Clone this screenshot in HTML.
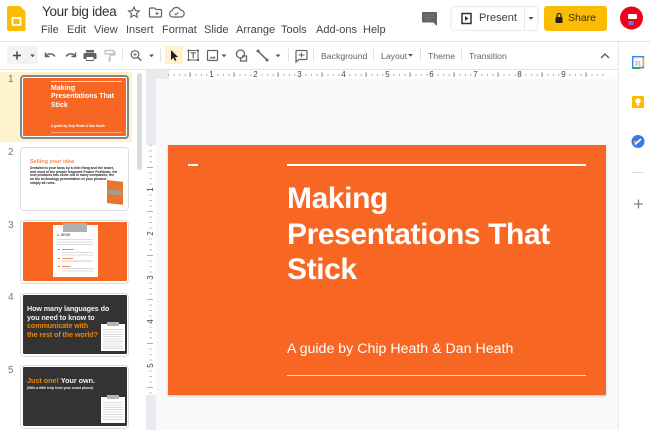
<!DOCTYPE html>
<html><head><meta charset="utf-8"><style>
html,body{margin:0;padding:0;width:650px;height:430px;overflow:hidden;background:#fff;font-family:"Liberation Sans",sans-serif}
#root{position:relative;width:650px;height:430px;overflow:hidden}
.a{position:absolute}
.t{position:absolute;white-space:nowrap}
svg{position:absolute;left:0;top:0}
.menu{font-size:11px;color:#444;top:24px;line-height:13px}
.tb{font-size:8.700px;color:#5f6368;top:50px;line-height:12px}
.thumb{position:absolute;left:20px;width:107px;height:62px;border:1px solid #dadce0;border-radius:4px;background:#fff}
.in{position:absolute;left:2px;top:1px;width:104px;height:59px;overflow:hidden;border-radius:1px}
.num{position:absolute;font-size:10px;line-height:11px;color:#777;left:8px}
.rn{position:absolute;width:7px;height:9px;line-height:9px;font-size:8px;text-align:center;background:#fff;color:#444}
.ln{background:repeating-linear-gradient(#ddd 0,#ddd 1px,#fff 1px,#fff 2.400px)}
</style></head><body><div id="root">

<!-- backgrounds -->
<div class="a" style="left:0;top:41px;width:650px;height:1px;background:#e3e4e6"></div>
<div class="a" style="left:0;top:69px;width:618px;height:1px;background:#e3e4e6"></div>
<div class="a" style="left:146px;top:70px;width:472px;height:360px;background:#f8f9fa"></div>
<div class="a" style="left:618px;top:42px;width:1px;height:388px;background:#e8eaed"></div>
<div class="a" style="left:146px;top:70px;width:472px;height:9px;background:#e8eaed"></div>
<div class="a" style="left:169px;top:70px;width:449px;height:9px;background:#fff"></div>
<div class="a" style="left:146px;top:70px;width:10px;height:360px;background:#e8eaed"></div>
<div class="a" style="left:146px;top:145px;width:10px;height:250px;background:#fff"></div>
<div class="a" style="left:0;top:72px;width:132px;height:70px;background:#fef2cf"></div>
<div class="a" style="left:137px;top:73px;width:5px;height:97px;background:#dadce0;border-radius:3px"></div>

<!-- ruler ticks -->
<div class="a" style="left:168px;top:74px;width:438px;height:2px;background:repeating-linear-gradient(90deg,#b0b3b6 0,#b0b3b6 1px,transparent 1px,transparent 5.500px)"></div>
<div class="a" style="left:149px;top:145px;width:3px;height:250px;background:repeating-linear-gradient(#c4c6c9 0,#c4c6c9 1px,transparent 1px,transparent 5.500px)"></div>

<!-- header icons/text -->
<svg width="650" height="430" viewBox="0 0 650 430">
  <path d="M9 6h11l5.500 5.500V29a2 2 0 0 1-2 2H9a2 2 0 0 1-2-2V8a2 2 0 0 1 2-2z" fill="#fbbc04"/>
  <rect x="12.500" y="18" width="8" height="7" rx="1" fill="none" stroke="#fff" stroke-width="1.800"/>
  <!-- star -->
  <path d="M134 7l1.500 3.600 3.900.3-3 2.500.9 3.800-3.300-2-3.300 2 .9-3.800-3-2.500 3.900-.3z" fill="none" stroke="#5f6368" stroke-width="1.100"/>
  <!-- folder -->
  <path d="M150.500 8h4l1.500 1.500h4.500a1 1 0 0 1 1 1v5.500a1 1 0 0 1-1 1h-10a1 1 0 0 1-1-1v-7a1 1 0 0 1 1-1z" fill="none" stroke="#5f6368" stroke-width="1.200"/>
  <path d="M155.500 13.500h3M157 12v3" stroke="#5f6368" stroke-width="1"/>
  <!-- cloud -->
  <path d="M174 17h-1.500a3.200 3.200 0 0 1-.4-6.300 4.500 4.500 0 0 1 8.400-.6 3.400 3.400 0 0 1 .5 6.900z" fill="none" stroke="#5f6368" stroke-width="1.200"/>
  <path d="M174.500 13.500l1.500 1.300 2.500-2.600" fill="none" stroke="#5f6368" stroke-width="1"/>
  <!-- comment -->
  <path d="M423 12h13a1 1 0 0 1 1 1v11l0 2-3.500-3.500H423a1 1 0 0 1-1-1V13a1 1 0 0 1 1-1z" fill="#5f6368"/>
  <path d="M425 15h9M425 17.500h9M425 20h6" stroke="#777" stroke-width="1"/>
  <!-- present -->
  <rect x="451" y="6.500" width="87" height="24" rx="3" fill="#fff" stroke="#e8eaed"/>
  <path d="M524.500 7v23" stroke="#e8eaed"/>
  <rect x="462" y="13.500" width="9" height="10" fill="none" stroke="#333" stroke-width="1.500"/>
  <path d="M465 16v5l3.500-2.500z" fill="#333"/>
  <path d="M528.500 17h5l-2.500 2.800z" fill="#444"/>
  <!-- share -->
  <rect x="544" y="6" width="63" height="25" rx="3" fill="#fbbc04"/>
  <rect x="555.500" y="17" width="7" height="6" rx="1" fill="#222"/>
  <path d="M557 17v-1.500a2 2 0 0 1 4 0V17" fill="none" stroke="#222" stroke-width="1.200"/>
  <!-- avatar -->
  <circle cx="631.500" cy="18" r="11.500" fill="#f0001a"/>
  <rect x="628" y="14" width="9" height="5" rx="1" fill="#fff"/>
  <rect x="628.500" y="21" width="5" height="4" fill="#5b7fd6"/>

  <!-- toolbar -->
  <rect x="7" y="46" width="31" height="18" rx="2" fill="#f1f3f4"/>
  <path d="M13 55.500h8M17 51.500v8" stroke="#444" stroke-width="1.500"/>
  <path d="M30 54.500h5l-2.500 2.800z" fill="#555"/>
  <!-- undo/redo -->
  <path d="M45.500 52.500v4h4M46 56c2-2.800 6.500-3 9 .5" fill="none" stroke="#5f6368" stroke-width="1.500"/>
  <path d="M75.500 52.500v4h-4M75 56c-2-2.800-6.500-3-9 .5" fill="none" stroke="#5f6368" stroke-width="1.500"/>
  <!-- print -->
  <path d="M85 53h10a1.500 1.500 0 0 1 1.500 1.500V59h-2.500v2h-8v-2h-2.500v-4.500A1.500 1.500 0 0 1 85 53z" fill="#5f6368"/>
  <rect x="86" y="50" width="8" height="2.500" fill="#5f6368"/>
  <rect x="86.500" y="57" width="7" height="3" fill="#fff"/>
  <!-- paint -->
  <path d="M105 50.500h8.500v3.500H105zM113.500 52h1.500v3h-5v2" fill="none" stroke="#bdc1c6" stroke-width="1.200"/>
  <rect x="108.700" y="57" width="2" height="4.500" fill="#bdc1c6"/>
  <path d="M122.500 48v14" stroke="#e3e4e6"/>
  <!-- zoom -->
  <circle cx="135" cy="54.500" r="3.800" fill="none" stroke="#5f6368" stroke-width="1.200"/>
  <path d="M138 57.500l3.300 3.300" stroke="#5f6368" stroke-width="1.400"/>
  <path d="M133.200 54.500h3.600M135 52.700v3.600" stroke="#5f6368" stroke-width=".8"/>
  <path d="M149 54.500h5l-2.500 2.800z" fill="#555"/>
  <path d="M160.500 48v14" stroke="#e3e4e6"/>
  <!-- select -->
  <rect x="165" y="46" width="18" height="18" rx="1" fill="#fef2cf"/>
  <path d="M171 50v10l2.400-2.300 1.500 3.300 1.500-.7-1.500-3.200h3.200z" fill="#222"/>
  <!-- text box -->
  <rect x="188.500" y="50.500" width="9.500" height="9.500" fill="none" stroke="#5f6368" stroke-width="1"/>
  <path d="M190.500 52.800h5.500M193.200 52.800v5.500" stroke="#5f6368" stroke-width="1.200"/>
  <rect x="187.500" y="49.500" width="2" height="2" fill="#5f6368"/><rect x="197" y="49.500" width="2" height="2" fill="#5f6368"/><rect x="187.500" y="59" width="2" height="2" fill="#5f6368"/><rect x="197" y="59" width="2" height="2" fill="#5f6368"/>
  <!-- image -->
  <rect x="207.500" y="50.500" width="10" height="10" rx="1" fill="none" stroke="#5f6368" stroke-width="1.200"/>
  <path d="M209.500 58.500l2-2 1.500 1.200 1.500-1.700 1 2.500z" fill="#5f6368"/>
  <path d="M221.500 54.500h5l-2.500 2.800z" fill="#555"/>
  <!-- shape -->
  <circle cx="240.500" cy="54" r="4" fill="none" stroke="#5f6368" stroke-width="1.300"/>
  <path d="M242 56h4.500v5h-6v-2.500" fill="none" stroke="#5f6368" stroke-width="1.300"/>
  <!-- line -->
  <path d="M258 51l9 9" stroke="#5f6368" stroke-width="1.500"/>
  <circle cx="258" cy="51" r="1.500" fill="#5f6368"/><circle cx="267" cy="60" r="1.500" fill="#5f6368"/>
  <path d="M275.500 54.500h5l-2.500 2.800z" fill="#555"/>
  <path d="M288.500 48v14" stroke="#e3e4e6"/>
  <!-- comment add -->
  <path d="M297 50.500h9a1 1 0 0 1 1 1v7a1 1 0 0 1-1 1h-7l-3 2.500v-10.500a1 1 0 0 1 1-1z" fill="none" stroke="#5f6368" stroke-width="1.200"/>
  <path d="M298.500 55h6M301.500 52.500v5" stroke="#5f6368" stroke-width="1.100"/>
  <path d="M313.500 48v14" stroke="#e3e4e6"/>
  <path d="M373.500 48v14M420.500 48v14M461.500 48v14" stroke="#e3e4e6"/>
  <path d="M408 54h5l-2.500 2.800z" fill="#555"/>
  <path d="M601 58l4-4 4 4" fill="none" stroke="#5f6368" stroke-width="1.500"/>

  <!-- side panel -->
  <rect x="632.700" y="56.700" width="10.600" height="11" fill="#fff" stroke="#4285f4" stroke-width="1.500"/>
  <path d="M632 68h8" stroke="#34a853" stroke-width="2"/><path d="M643.500 58v8" stroke="#fbbc04" stroke-width="1.600"/>
  <text x="638" y="65.500" font-size="6" text-anchor="middle" fill="#4285f4" font-family="Liberation Sans">31</text>
  <rect x="632" y="96" width="12" height="12" rx="1" fill="#fbbc04"/>
  <circle cx="638" cy="101" r="2.700" fill="#fff"/><rect x="636.700" y="103.800" width="2.600" height="1.600" fill="#fff"/>
  <circle cx="638" cy="141.500" r="6.500" fill="#3b78e7"/>
  <path d="M635 144.500l6-5.500" stroke="#fff" stroke-width="1.800"/><circle cx="635" cy="142" r="1.200" fill="#fbbc04"/>
  <path d="M632 172.500h12" stroke="#dadce0"/>
  <path d="M634 204h9M638.500 199.500v9" stroke="#80868b" stroke-width="1.300"/>

  <!-- ruler half-inch ticks -->
  <path stroke="#999" stroke-width="1" d="M190 72v5M234 72v5M278 72v5M322 72v5M366 72v5M410 72v5M454 72v5M498 72v5M542 72v5M586 72v5"/>
  <path stroke="#aaa" stroke-width="1" d="M147 167.500h6M147 211.500h6M147 255.500h6M147 299.500h6M147 343.500h6M147 387.500h6"/>
</svg>

<div class="t" style="left:42px;top:3px;font-size:13.500px;line-height:18px;color:#333;letter-spacing:-.3px">Your big idea</div>
<div class="t menu" style="left:41px">File</div>
<div class="t menu" style="left:67px">Edit</div>
<div class="t menu" style="left:94px">View</div>
<div class="t menu" style="left:126px">Insert</div>
<div class="t menu" style="left:162px">Format</div>
<div class="t menu" style="left:204px">Slide</div>
<div class="t menu" style="left:236px">Arrange</div>
<div class="t menu" style="left:281px">Tools</div>
<div class="t menu" style="left:316px">Add-ons</div>
<div class="t menu" style="left:363px">Help</div>
<div class="t" style="left:479px;top:11px;font-size:11px;line-height:14px;color:#3c4043">Present</div>
<div class="t" style="left:568px;top:11px;font-size:10.500px;line-height:14px;color:#3c3005">Share</div>
<div class="t tb" style="left:321px">Background</div>
<div class="t tb" style="left:381px">Layout</div>
<div class="t tb" style="left:428px">Theme</div>
<div class="t tb" style="left:469px">Transition</div>

<!-- ruler numbers -->
<span class="rn" style="left:208px;top:70px">1</span>
<span class="rn" style="left:252px;top:70px">2</span>
<span class="rn" style="left:296px;top:70px">3</span>
<span class="rn" style="left:340px;top:70px">4</span>
<span class="rn" style="left:384px;top:70px">5</span>
<span class="rn" style="left:428px;top:70px">6</span>
<span class="rn" style="left:472px;top:70px">7</span>
<span class="rn" style="left:516px;top:70px">8</span>
<span class="rn" style="left:560px;top:70px">9</span>
<span class="rn" style="left:147px;top:185px;transform:rotate(-90deg)">1</span>
<span class="rn" style="left:147px;top:229px;transform:rotate(-90deg)">2</span>
<span class="rn" style="left:147px;top:273px;transform:rotate(-90deg)">3</span>
<span class="rn" style="left:147px;top:317px;transform:rotate(-90deg)">4</span>
<span class="rn" style="left:147px;top:361px;transform:rotate(-90deg)">5</span>

<!-- main slide -->
<div class="a" style="left:168px;top:145px;width:438px;height:250px;background:#f76623;box-shadow:0 1px 2px rgba(0,0,0,.22)">
  <div class="a" style="left:20px;top:19px;width:10px;height:2px;background:#fff"></div>
  <div class="a" style="left:119px;top:19px;width:299px;height:2px;background:#fff"></div>
  <div class="t" style="left:119px;top:36px;font-size:30px;line-height:35.500px;font-weight:bold;color:#fff;letter-spacing:-.4px">Making<br>Presentations That<br>Stick</div>
  <div class="t" style="left:119px;top:195px;font-size:14.200px;line-height:19px;color:#fff">A guide by Chip Heath &amp; Dan Heath</div>
  <div class="a" style="left:119px;top:230px;width:299px;height:1px;background:#ffd9c4"></div>
</div>

<!-- thumbs -->
<div class="num" style="top:74px">1</div>
<div class="thumb" style="top:75px;height:60px;border:2px solid #80868b;width:105px"><div class="in" style="left:1px;top:1px;width:103px;height:58px;background:#f76623">
  <div class="a" style="left:28px;top:3px;width:71px;height:1px;background:#ffd9c4"></div>
  <div class="t" style="left:28px;top:7px;font-size:7px;line-height:8.300px;font-weight:bold;color:#fff">Making<br>Presentations That<br>Stick</div>
  <div class="t" style="left:28px;top:46px;font-size:3.200px;line-height:5px;font-weight:bold;color:#fff">A guide by Chip Heath &amp; Dan Heath</div>
  <div class="a" style="left:28px;top:54px;width:71px;height:1px;background:#ffa679"></div>
</div></div>

<div class="num" style="top:147px">2</div>
<div class="thumb" style="top:147px"><div class="in" style="background:#fff">
  <div class="t" style="left:7px;top:10px;font-size:5.500px;line-height:7px;font-weight:bold;color:#f98a50">Selling your idea</div>
  <div class="t" style="left:7px;top:18px;font-size:3.400px;line-height:3.700px;color:#222;font-weight:bold">Dreaded to your boss by a chin thing and the smart,<br>and most of the people fragment Fowler Politician, the<br>new products has come out in many companies, the<br>on the technology presentation of your product<br>simply all rules.</div>
  <div class="a" style="left:84px;top:32px;width:16px;height:23px;background:#e7742f;transform:skewY(6deg)"></div>
  <div class="a" style="left:85px;top:41px;width:14px;height:5px;background:#a79a8e;transform:skewY(6deg)"></div>
</div></div>

<div class="num" style="top:220px">3</div>
<div class="thumb" style="top:220px"><div class="in" style="background:#f76623">
  <div class="a" style="left:30px;top:3px;width:45px;height:52px;background:#fff"></div>
  <div class="a" style="left:40px;top:1px;width:24px;height:9px;background:#b0b0b0"></div>
  <div class="t" style="left:34px;top:11px;font-size:3.500px;line-height:4px;font-weight:bold;color:#666">1. WOW</div>
  <div class="a ln" style="left:34px;top:17px;width:36px;height:7px"></div>
  <div class="a" style="left:39px;top:27px;width:12px;height:1px;background:#f98a50"></div>
  <div class="a ln" style="left:39px;top:30px;width:31px;height:4px"></div>
  <div class="a" style="left:39px;top:36px;width:11px;height:1px;background:#f98a50"></div>
  <div class="a" style="left:39px;top:38px;width:30px;height:2px;background:#e4e4e4"></div>
  <div class="a" style="left:39px;top:44px;width:8px;height:1px;background:#f98a50"></div>
  <div class="a ln" style="left:39px;top:46px;width:32px;height:5px"></div>
  <div class="a" style="left:35px;top:27px;width:2px;height:1px;background:#f76623"></div>
  <div class="a" style="left:35px;top:36px;width:2px;height:1px;background:#f76623"></div>
  <div class="a" style="left:35px;top:44px;width:2px;height:1px;background:#f76623"></div>
</div></div>

<div class="num" style="top:292px">4</div>
<div class="thumb" style="top:293px"><div class="in" style="background:#333">
  <div class="t" style="left:4px;top:10px;font-size:7.200px;line-height:8.500px;font-weight:bold;color:#f2f2f2;letter-spacing:-.1px">How many languages do<br>you need to know to<br><span style="color:#e8860c">communicate with<br>the rest of the world?</span></div>
  <div class="a" style="left:78px;top:29px;width:24px;height:27px;background:#fff"></div>
  <div class="a" style="left:84px;top:27px;width:12px;height:4px;background:#b5b5b5"></div>
  <div class="a ln" style="left:80px;top:34px;width:20px;height:20px"></div>
</div></div>

<div class="num" style="top:365px">5</div>
<div class="thumb" style="top:365px"><div class="in" style="background:#333">
  <div class="t" style="left:4px;top:9px;font-size:7.200px;line-height:9px;font-weight:bold;color:#f2f2f2"><span style="color:#e8860c">Just one!</span> Your own.</div>
  <div class="t" style="left:4px;top:18.500px;font-size:3.400px;line-height:5px;font-weight:bold;color:#eee">(With a little help from your smart phone)</div>
  <div class="a" style="left:78px;top:30px;width:24px;height:26px;background:#fff"></div>
  <div class="a" style="left:84px;top:28px;width:12px;height:4px;background:#b5b5b5"></div>
  <div class="a ln" style="left:80px;top:35px;width:20px;height:19px"></div>
</div></div>

</div></body></html>
